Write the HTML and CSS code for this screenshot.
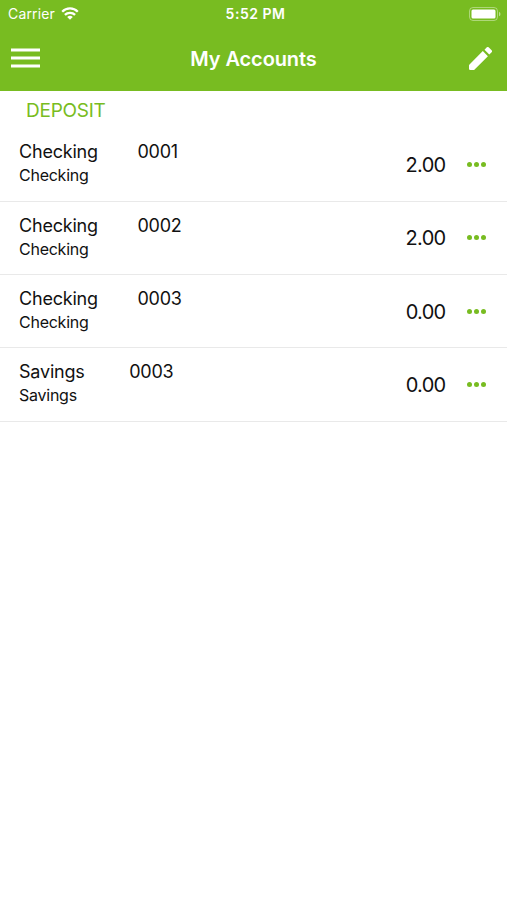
FILE: index.html
```html
<!DOCTYPE html>
<html lang="en">
<head>
    <meta charset="UTF-8">
    <meta name="viewport" content="width=device-width, initial-scale=1.0">
    <title>My Accounts</title>
    <link rel="stylesheet" href="styles.css">
</head>
<body>
    <header>
        <div class="status-bar">
            <div class="carrier">
                <span>Carrier</span>
                <svg class="wifi" viewBox="0 0 18 13" width="18" height="13">
                    <path d="M1.2 4.7a11 11 0 0 1 15.6 0M3.9 7.9a7.2 7.2 0 0 1 10.2 0" fill="none" stroke="#fff" stroke-width="2.3"/>
                    <path d="M6.2 10a4 4 0 0 1 5.6 0L9 12.8z" fill="#fff"/>
                </svg>
            </div>
            <div class="time">5:52 PM</div>
            <svg class="battery" viewBox="0 0 32 14" width="32" height="14">
                <rect x="0.5" y="0.5" width="28" height="13" rx="3.5" fill="none" stroke="#fff" stroke-opacity="0.4"/>
                <rect x="2.5" y="2.5" width="24" height="9" rx="1.5" fill="#fff"/>
                <path d="M30 4.7a2.5 2.5 0 0 1 0 4.6z" fill="#fff" fill-opacity="0.5"/>
            </svg>
        </div>
        <nav class="nav-bar">
            <svg class="menu" viewBox="0 0 30 20" width="30" height="20">
                <path d="M1 2h29M1 10h29M1 18h29" stroke="#fff" stroke-width="3"/>
            </svg>
            <h1>My Accounts</h1>
            <svg class="edit" viewBox="3 3 18 18" width="23" height="23">
                <path d="M3.4 16.6l10.4-10.4 4 4L7.4 20.6q-.4.4-.9.4H4q-1 0-1-1v-2.5q0-.5.4-.9zM20.71 7.04a1 1 0 0 0 0-1.41l-2.34-2.34a1 1 0 0 0-1.41 0l-1.83 1.83 3.75 3.75 1.83-1.83z" fill="#fff"/>
            </svg>
        </nav>
    </header>
    <main>
        <h2>DEPOSIT</h2>
        <ul class="accounts">
            <li>
                <div class="info">
                    <div class="name"><span>Checking</span><span>0001</span></div>
                    <div class="type">Checking</div>
                </div>
                <div class="balance">2.00</div>
                <div class="more"><i></i><i></i><i></i></div>
            </li>
            <li>
                <div class="info">
                    <div class="name"><span>Checking</span><span>0002</span></div>
                    <div class="type">Checking</div>
                </div>
                <div class="balance">2.00</div>
                <div class="more"><i></i><i></i><i></i></div>
            </li>
            <li>
                <div class="info">
                    <div class="name"><span>Checking</span><span>0003</span></div>
                    <div class="type">Checking</div>
                </div>
                <div class="balance">0.00</div>
                <div class="more"><i></i><i></i><i></i></div>
            </li>
            <li>
                <div class="info">
                    <div class="name savings"><span>Savings</span><span>0003</span></div>
                    <div class="type">Savings</div>
                </div>
                <div class="balance">0.00</div>
                <div class="more"><i></i><i></i><i></i></div>
            </li>
        </ul>
    </main>
</body>
</html>
```
FILE: styles.css
```css
* {
    box-sizing: border-box;
}
body {
    margin: 0;
    background: #fff;
    color: #111;
    font-family: Inter, sans-serif;
}
header {
    height: 91px;
    background: #78bc21;
    color: #fff;
}
.status-bar {
    display: grid;
    grid-template-columns: 1fr auto 1fr;
    align-items: center;
    height: 27px;
    padding: 0 6px 0 8px;
}
.carrier {
    display: flex;
    align-items: center;
    gap: 6px;
    font-size: 14px;
    letter-spacing: 0.15px;
}
.time {
    padding-left: 2px;
    font-size: 14px;
    font-weight: 600;
    letter-spacing: 0.5px;
}
.battery {
    justify-self: end;
}
.nav-bar {
    display: grid;
    grid-template-columns: 1fr auto 1fr;
    align-items: center;
    height: 64px;
    padding: 0 15px 0 10px;
}
.menu, .edit {
    margin-bottom: 2px;
}
h1 {
    margin: 0;
    padding-left: 5px;
    font-size: 20px;
    font-weight: 600;
    letter-spacing: -0.1px;
}
.edit {
    justify-self: end;
}
h2 {
    margin: 0;
    padding-left: 26px;
    height: 37px;
    line-height: 39px;
    color: #78bc21;
    font-size: 19px;
    font-weight: 400;
    letter-spacing: -0.25px;
}
.accounts {
    margin: 0;
    padding: 0.4px 0 0;
    list-style: none;
}
.accounts li {
    display: flex;
    align-items: center;
    height: 73.33px;
    padding: 0 21px 0 19px;
    border-bottom: 1px solid #e9e9e9;
}
.info {
    flex: 1;
    padding-bottom: 1.5px;
}
.name {
    display: flex;
    gap: 39.5px;
    font-size: 18px;
    line-height: 24px;
    letter-spacing: -0.2px;
}
.name.savings {
    gap: 44.5px;
}
.type {
    font-size: 16px;
    line-height: 23px;
    letter-spacing: -0.25px;
}
.balance {
    padding-top: 1px;
    font-size: 20px;
    letter-spacing: -0.7px;
}
.more {
    display: flex;
    gap: 2px;
    margin-left: 21.5px;
}
.more i {
    width: 5px;
    height: 5px;
    border-radius: 50%;
    background: #78bc21;
}
```
